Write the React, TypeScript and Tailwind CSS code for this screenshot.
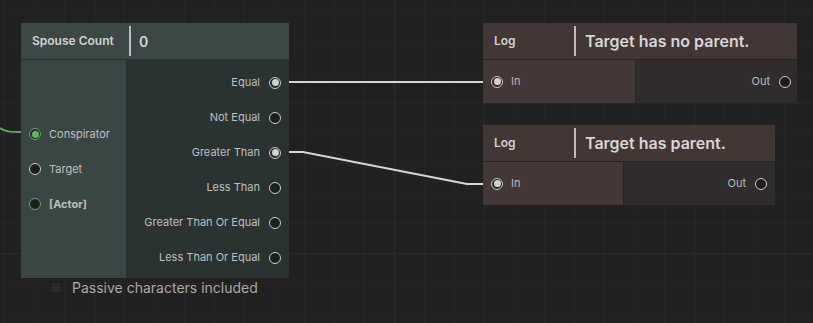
import React from 'react'

type PortKind = 'empty' | 'linked' | 'green' | 'greenEmpty'

function Port({ kind }: { kind: PortKind }) {
  if (kind === 'linked')
    return (
      <div className="w-[12px] h-[12px] rounded-full border-[1.5px] border-[#c9c9c9] bg-[#2a2a2a] flex items-center justify-center shrink-0">
        <div className="w-[7px] h-[7px] rounded-full bg-[#d2d2d2]" />
      </div>
    )
  if (kind === 'green')
    return (
      <div className="w-[12px] h-[12px] rounded-full border-[1.5px] border-[#5aa85c] bg-[#2a2a2a] flex items-center justify-center shrink-0">
        <div className="w-[7px] h-[7px] rounded-full bg-[#62b565]" />
      </div>
    )
  if (kind === 'greenEmpty')
    return <div className="w-[12px] h-[12px] rounded-full border-[1.5px] border-[#5aa85c] bg-[#1e1e1e] shrink-0" />
  return <div className="w-[12px] h-[12px] rounded-full border-[1.5px] border-[#cdcdcd] bg-[#1e1e1e] shrink-0" />
}

const outputs: { label: string; kind: PortKind }[] = [
  { label: 'Equal', kind: 'linked' },
  { label: 'Not Equal', kind: 'empty' },
  { label: 'Greater Than', kind: 'linked' },
  { label: 'Less Than', kind: 'empty' },
  { label: 'Greater Than Or Equal', kind: 'empty' },
  { label: 'Less Than Or Equal', kind: 'empty' },
]

const inputs: { label: string; kind: PortKind; bold?: boolean }[] = [
  { label: 'Conspirator', kind: 'green' },
  { label: 'Target', kind: 'empty' },
  { label: '[Actor]', kind: 'greenEmpty', bold: true },
]

function LogNode({
  top,
  width,
  leftWidth,
  text,
  outPad,
}: {
  top: string
  width: string
  leftWidth: string
  text: string
  outPad: string
}) {
  return (
    <div className={`absolute left-[483px] ${top} ${width} h-[80px] flex flex-col`}>
      <div className="h-[37px] bg-[#433736] border-b border-[#2a2424] flex items-center">
        <div className="w-[91px] pl-[11px] text-[12px] font-semibold text-[#d0d0d0]">Log</div>
        <div className="w-[2px] h-[30px] bg-[#bdbdbd]" />
        <div className="pl-[9px] text-[16px] font-semibold text-[#d6d6d6]">{text}</div>
      </div>
      <div className="flex-1 flex">
        <div className={`${leftWidth} bg-[#433837] border-r border-[#2a2424] flex items-center pl-[8px] gap-[8px]`}>
          <Port kind="linked" />
          <span className="text-[11px] text-[#bdbdbd]">In</span>
        </div>
        <div className={`flex-1 bg-[#312c2c] flex items-center justify-end gap-[9px] ${outPad}`}>
          <span className="text-[11px] text-[#bdbdbd]">Out</span>
          <Port kind="empty" />
        </div>
      </div>
    </div>
  )
}

export default function App() {
  return (
    <main className="relative w-[813px] h-[323px] overflow-hidden bg-[#212121] font-['Inter',sans-serif] bg-[linear-gradient(to_right,#2b2b2b_1px,transparent_1px),linear-gradient(to_bottom,#2b2b2b_1px,transparent_1px),linear-gradient(to_right,#262626_1px,transparent_1px),linear-gradient(to_bottom,#262626_1px,transparent_1px)] bg-[length:300px_300px,300px_300px,30px_30px,30px_30px] bg-[position:94px_253px,94px_253px,4px_13px,4px_13px]">
      <svg className="absolute inset-0 pointer-events-none" width="813" height="323">
        <path d="M0 128 C4 131 8 132 21 132" stroke="#5aaa5c" strokeWidth="2" fill="none" />
        <path d="M289 82 H483" stroke="#d6d6d6" strokeWidth="2" fill="none" />
        <path d="M289 152 H303 L467 184 H483" stroke="#d6d6d6" strokeWidth="2" fill="none" />
      </svg>

      {/* Spouse Count node */}
      <div className="absolute left-[21px] top-[23px] w-[268px] h-[255px] flex flex-col">
        <div className="h-[37px] bg-[#3c4846] border-b border-[#253030] flex items-center">
          <div className="w-[108px] pl-[11px] text-[12px] font-semibold text-[#d0d0d0]">Spouse Count</div>
          <div className="w-[2px] h-[30px] bg-[#bdbdbd]" />
          <div className="pl-[8px] text-[14px] font-semibold text-[#d4d4d4]">0</div>
        </div>
        <div className="flex-1 flex">
          <div className="w-[106px] bg-[#3a4644] border-r border-[#253030] flex flex-col justify-center">
            {inputs.map((p) => (
              <div key={p.label} className="h-[35px] flex items-center pl-[8px] gap-[8px]">
                <Port kind={p.kind} />
                <span className={`text-[11px] text-[#bfbfbf] ${p.bold ? 'font-bold' : ''}`}>{p.label}</span>
              </div>
            ))}
          </div>
          <div className="flex-1 bg-[#2a3332] pt-[5px] flex flex-col">
            {outputs.map((p) => (
              <div key={p.label} className="h-[35px] flex items-center justify-end pr-[8px] gap-[9px]">
                <span className="text-[11px] text-[#bfbfbf]">{p.label}</span>
                <Port kind={p.kind} />
              </div>
            ))}
          </div>
        </div>
      </div>

      <div className="absolute left-[50px] top-[282px] flex items-center gap-[10px]">
        <div className="w-[12px] h-[12px] bg-[#2a2a2a] border border-[#1c1c1c]" />
        <span className="text-[14px] text-[#a8a8a8] leading-[12px]">Passive characters included</span>
      </div>

      <LogNode top="top-[23px]" width="w-[314px]" leftWidth="w-[153px]" text="Target has no parent." outPad="pr-[6px]" />
      <LogNode top="top-[125px]" width="w-[292px]" leftWidth="w-[141px]" text="Target has parent." outPad="pr-[8px]" />
    </main>
  )
}
